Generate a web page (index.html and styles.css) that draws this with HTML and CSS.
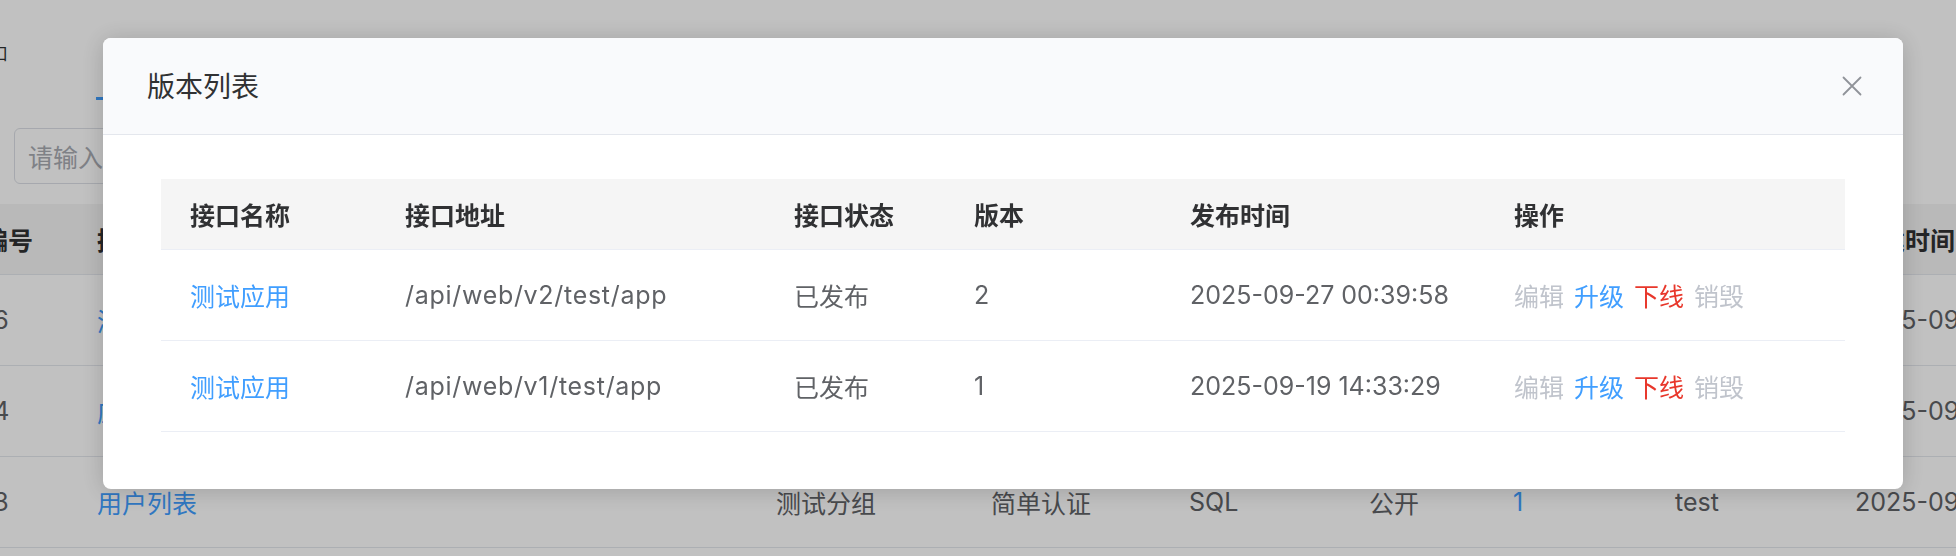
FILE: index.html
```html
<!DOCTYPE html>
<html lang="zh-CN">
<head>
<meta charset="utf-8">
<title>版本列表</title>
<link rel="stylesheet" href="styles.css">
</head>
<body>
<div class="page">
  <div class="crumb">接口</div>
  <div class="tabs"><span class="tab active"><span class="tab-label">接口列表</span></span></div>
  <div class="search"><span class="placeholder">请输入接口名称</span></div>
  <div class="bg-table">
    <div class="bg-row bg-head">
      <div>编号</div><div>接口名称</div><div>接口地址</div><div>分组</div><div>认证方式</div><div>类型</div><div>权限</div><div>版本</div><div>创建人</div><div>创建时间</div>
    </div>
    <div class="bg-row">
      <div>16</div><div class="bg-link">测试应用</div><div></div><div>测试分组</div><div>简单认证</div><div>SQL</div><div>公开</div><div class="bg-link">2</div><div>test</div><div>2025-09-27 00:39:58</div>
    </div>
    <div class="bg-row">
      <div>14</div><div class="bg-link">应用列表</div><div></div><div>测试分组</div><div>简单认证</div><div>SQL</div><div>公开</div><div class="bg-link">1</div><div>test</div><div>2025-09-19 14:33:29</div>
    </div>
    <div class="bg-row">
      <div>13</div><div class="bg-link">用户列表</div><div></div><div>测试分组</div><div>简单认证</div><div>SQL</div><div>公开</div><div class="bg-link">1</div><div>test</div><div>2025-09-18 10:12:45</div>
    </div>
  </div>
</div>

<div class="overlay"></div>

<div class="modal">
  <div class="m-head">
    <span class="m-title">版本列表</span>
    <svg class="m-close" width="20" height="20" viewBox="0 0 20 20" aria-hidden="true">
      <path d="M1.5 1.5 L18.5 18.5 M18.5 1.5 L1.5 18.5" stroke="#909399" stroke-width="1.8" stroke-linecap="round" fill="none"/>
    </svg>
  </div>
  <div class="m-body">
    <div class="vt">
      <div class="vt-row vt-head">
        <div class="vt-cell">接口名称</div>
        <div class="vt-cell">接口地址</div>
        <div class="vt-cell">接口状态</div>
        <div class="vt-cell">版本</div>
        <div class="vt-cell">发布时间</div>
        <div class="vt-cell">操作</div>
      </div>
      <div class="vt-row">
        <div class="vt-cell link">测试应用</div>
        <div class="vt-cell path">/api/web/v2/test/app</div>
        <div class="vt-cell">已发布</div>
        <div class="vt-cell">2</div>
        <div class="vt-cell">2025-09-27 00:39:58</div>
        <div class="vt-cell ops"><span class="op off">编辑</span><span class="op up">升级</span><span class="op down">下线</span><span class="op off">销毁</span></div>
      </div>
      <div class="vt-row">
        <div class="vt-cell link">测试应用</div>
        <div class="vt-cell path">/api/web/v1/test/app</div>
        <div class="vt-cell">已发布</div>
        <div class="vt-cell">1</div>
        <div class="vt-cell">2025-09-19 14:33:29</div>
        <div class="vt-cell ops"><span class="op off">编辑</span><span class="op up">升级</span><span class="op down">下线</span><span class="op off">销毁</span></div>
      </div>
    </div>
  </div>
</div>
</body>
</html>
```
FILE: styles.css
```css
* { box-sizing: border-box; }
html, body {
  margin: 0;
  padding: 0;
  width: 1956px;
  height: 556px;
  overflow: hidden;
  background: #ffffff;
  font-family: Inter, "Noto Sans CJK SC", sans-serif;
  color: #606266;
}

/* ---------- background page ---------- */
.page {
  width: 1956px;
}
.crumb {
  margin: 44px 0 0 -26px;
  height: 20px;
  line-height: 20px;
  font-size: 17px;
  color: #303133;
}
.tabs {
  height: 36px;
  display: flex;
  padding-left: 96px;
}
.tab {
  display: block;
  height: 36px;
  width: 140px;
  border-bottom: 3px solid #409eff;
  overflow: hidden;
  white-space: nowrap;
}
.tab-label {
  display: block;
  padding-left: 20px;
  font-size: 25px;
  line-height: 33px;
  color: #409eff;
}
.search {
  margin: 28px 0 0 14px;
  width: 520px;
  height: 56px;
  border: 1px solid #dcdfe6;
  border-radius: 6px;
  padding: 0 13px;
  display: flex;
  align-items: center;
  font-size: 25px;
  color: #a8abb2;
}
.bg-table {
  margin: 20px 0 0 -17px;
  font-size: 25px;
}
.bg-row {
  display: grid;
  grid-template-columns: 114px 340px 339px 215px 198px 180px 144px 162px 180px 300px;
  height: 91px;
  align-items: center;
  border-bottom: 1px solid #e4e7ed;
  color: #606266;
  white-space: nowrap;
}
.bg-head {
  height: 71px;
  background: #f5f5f5;
  color: #303133;
  font-weight: 600;
}
.bg-link { color: #409eff; }

.overlay {
  position: fixed;
  inset: 0;
  background: rgba(0, 0, 0, 0.243);
}

/* ---------- modal ---------- */
.modal {
  position: fixed;
  left: 103px;
  top: 38px;
  width: 1800px;
  height: 451px;
  background: #ffffff;
  border-radius: 8px;
  overflow: hidden;
  box-shadow: 0 2px 24px rgba(0, 0, 0, 0.18);
}
.m-head {
  height: 97px;
  background: #f9fafc;
  border-bottom: 1px solid #e4e7ed;
  display: flex;
  align-items: center;
  justify-content: space-between;
  padding: 2px 41px 0 44px;
}
.m-title {
  font-size: 28px;
  line-height: 40px;
  color: #303133;
}
.m-close { display: block; margin-top: -2px; }
.m-body {
  padding: 44px 58px 0 58px;
}
.vt {
  font-size: 25px;
}
.vt-row {
  display: grid;
  grid-template-columns: 215px 389px 180px 216px 324px 360px;
  height: 91px;
  align-items: center;
  border-bottom: 1px solid #ebeef5;
  color: #606266;
}
.vt-head {
  height: 71px;
  background: #f5f5f5;
  color: #303133;
  font-weight: 600;
}
.vt-cell {
  padding-left: 29px;
  white-space: nowrap;
}
.vt-cell.link { color: #409eff; }
.vt-cell.path { letter-spacing: 0.7px; }
.ops {
  display: flex;
  gap: 10px;
}
.op.off { color: #c0c4cc; }
.op.up { color: #409eff; }
.op.down { color: #e8372b; }
```
